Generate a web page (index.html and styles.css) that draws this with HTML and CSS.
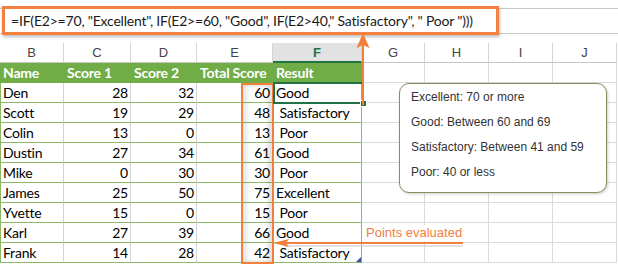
FILE: index.html
```html
<!DOCTYPE html>
<html>
<head>
<meta charset="utf-8">
<link rel="stylesheet" href="styles.css">
</head>
<body>
<div class="app">
  <div class="fbar">
    <div class="fline"></div>
    <div class="fbox">=IF(E2&gt;=70, "Excellent", IF(E2&gt;=60, "Good", IF(E2&gt;40," Satisfactory", " Poor ")))</div>
  </div>
  <div class="sheet">
    <div class="ch">B</div><div class="ch">C</div><div class="ch">D</div><div class="ch">E</div><div class="ch sel">F</div><div class="ch">G</div><div class="ch">H</div><div class="ch">I</div><div class="ch">J</div>

    <div class="th first">Name</div><div class="th">Score 1</div><div class="th">Score 2</div><div class="th">Total Score</div><div class="th last">Result</div><div class="c"></div><div class="c"></div><div class="c"></div><div class="c"></div>

    <div class="td first">Den</div><div class="td n">28</div><div class="td n">32</div><div class="td n">60</div><div class="td last">Good</div><div class="c"></div><div class="c"></div><div class="c"></div><div class="c"></div>
    <div class="td first">Scott</div><div class="td n">19</div><div class="td n">29</div><div class="td n">48</div><div class="td last">&nbsp;Satisfactory</div><div class="c"></div><div class="c"></div><div class="c"></div><div class="c"></div>
    <div class="td first">Colin</div><div class="td n">13</div><div class="td n">0</div><div class="td n">13</div><div class="td last">&nbsp;Poor</div><div class="c"></div><div class="c"></div><div class="c"></div><div class="c"></div>
    <div class="td first">Dustin</div><div class="td n">27</div><div class="td n">34</div><div class="td n">61</div><div class="td last">Good</div><div class="c"></div><div class="c"></div><div class="c"></div><div class="c"></div>
    <div class="td first">Mike</div><div class="td n">0</div><div class="td n">30</div><div class="td n">30</div><div class="td last">&nbsp;Poor</div><div class="c"></div><div class="c"></div><div class="c"></div><div class="c"></div>
    <div class="td first">James</div><div class="td n">25</div><div class="td n">50</div><div class="td n">75</div><div class="td last">Excellent</div><div class="c"></div><div class="c"></div><div class="c"></div><div class="c"></div>
    <div class="td first">Yvette</div><div class="td n">15</div><div class="td n">0</div><div class="td n">15</div><div class="td last">&nbsp;Poor</div><div class="c"></div><div class="c"></div><div class="c"></div><div class="c"></div>
    <div class="td first">Karl</div><div class="td n">27</div><div class="td n">39</div><div class="td n">66</div><div class="td last">Good</div><div class="c"></div><div class="c"></div><div class="c"></div><div class="c"></div>
    <div class="td first">Frank</div><div class="td n">14</div><div class="td n">28</div><div class="td n">42</div><div class="td last">&nbsp;Satisfactory<span class="resize"></span></div><div class="c"></div><div class="c"></div><div class="c"></div><div class="c"></div>
  </div>

  <div class="ebox"></div>
  <div class="selcell"><span class="handle"></span></div>

  <svg class="uparrow" width="16" height="72" viewBox="0 0 16 72">
    <line x1="8" y1="10" x2="8" y2="72" stroke="#f0803c" stroke-width="2"/>
    <polygon points="8,0 1.5,15 8,12 14.5,15" fill="#f0803c"/>
  </svg>

  <div class="legend">
    <div>Excellent: 70 or more</div>
    <div>Good: Between 60 and 69</div>
    <div>Satisfactory: Between 41 and 59</div>
    <div>Poor: 40 or less</div>
  </div>

  <div class="note">Points evaluated</div>
  <svg class="leftarrow" width="192" height="12" viewBox="0 0 192 12">
    <line x1="10" y1="5" x2="190" y2="5" stroke="#f0803c" stroke-width="2"/>
    <line x1="12" y1="8" x2="190" y2="8" stroke="#cfcfcf" stroke-width="2" opacity="0.6"/>
    <polygon points="0,5 16,1 13,5 16,9" fill="#f0803c"/>
  </svg>
</div>
</body>
</html>
```

FILE: styles.css
```css
* { box-sizing: border-box; }
html, body { margin: 0; padding: 0; background: #fff; }
.app {
  position: relative;
  width: 618px;
  height: 264px;
  overflow: hidden;
  font-family: Lato, "Liberation Sans", sans-serif;
  color: #000;
}
.fbar {
  position: relative;
  height: 43px;
  padding-top: 8px;
}
.fline {
  height: 26px;
  border-top: 1px solid #c8c8c8;
  border-bottom: 1px solid #c8c8c8;
}
.fbox {
  position: absolute;
  left: 2px;
  top: 6px;
  width: 497px;
  height: 29px;
  border: 3px solid #f3803e;
  background: #fff;
  box-shadow: 1px 2px 3px rgba(0,0,0,0.25);
  font-size: 14px;
  line-height: 23px;
  padding-left: 6px;
  white-space: nowrap;
  color: #1a1a1a;
  letter-spacing: -0.2px;
}
.sheet {
  display: grid;
  grid-template-columns: 64px 67px 66px 76px 89px 63px 64px 64px 64px;
  grid-auto-rows: 20px;
}
.ch {
  border-right: 1px solid #d6d6d6;
  border-bottom: 1px solid #c6c6c6;
  background: #fff;
  text-align: center;
  font-family: "Liberation Sans", sans-serif;
  font-size: 13px;
  line-height: 20px;
  color: #444;
}
.ch.sel {
  background: #e2e2e2;
  border-bottom: 2px solid #217346;
  color: #217346;
  font-weight: bold;
}
.c {
  border-right: 1px solid #dadada;
  border-bottom: 1px solid #dadada;
}
.th {
  background: #70ad47;
  color: #fff;
  font-weight: bold;
  font-size: 14px;
  line-height: 20px;
  padding-left: 3px;
  white-space: nowrap;
  letter-spacing: -0.2px;
}
.th.last { border-right: 1px solid #70ad47; }
.td {
  position: relative;
  border-right: 1px solid #d4d4d4;
  border-bottom: 1px solid #8cb865;
  font-size: 14px;
  line-height: 19px;
  padding: 0 2px 0 3px;
  white-space: nowrap;
  letter-spacing: -0.2px;
}
.td.first { border-left: 1px solid #8cb865; padding-left: 2px; }
.td.last { border-right: 1px solid #8cb865; }
.td.n { text-align: right; }
.resize {
  position: absolute;
  right: 0;
  bottom: 0;
  width: 0;
  height: 0;
  border-left: 5px solid transparent;
  border-bottom: 5px solid #3c4fa8;
}
.ebox {
  position: absolute;
  left: 241px;
  top: 83px;
  width: 33px;
  height: 181px;
  border: 2px solid #f0803c;
  box-shadow: inset -4px 0 4px rgba(0,0,0,0.12), inset 4px 0 4px rgba(0,0,0,0.1);
}
.selcell {
  position: absolute;
  left: 273px;
  top: 82px;
  width: 91px;
  height: 22px;
  border: 2px solid #217346;
}
.handle {
  position: absolute;
  right: -5px;
  bottom: -5px;
  width: 7px;
  height: 7px;
  background: #217346;
  border: 1px solid #fff;
}
.uparrow {
  position: absolute;
  left: 355px;
  top: 33px;
}
.legend {
  position: absolute;
  left: 399px;
  top: 83px;
  width: 208px;
  height: 110px;
  border: 1.5px solid #8e8c5a;
  border-radius: 10px;
  background: #fff;
  box-shadow: 1px 1px 3px rgba(0,0,0,0.2);
  padding: 1px 0 0 11px;
  font-family: "Liberation Sans", sans-serif;
  font-size: 12px;
  line-height: 25px;
  color: #333;
}
.note {
  position: absolute;
  left: 364px;
  top: 225px;
  font-family: "Liberation Sans", sans-serif;
  font-size: 13px;
  line-height: 16px;
  color: #f3803e;
  background: #fff;
  padding: 0 2px;
}
.leftarrow {
  position: absolute;
  left: 273px;
  top: 238px;
}
```
